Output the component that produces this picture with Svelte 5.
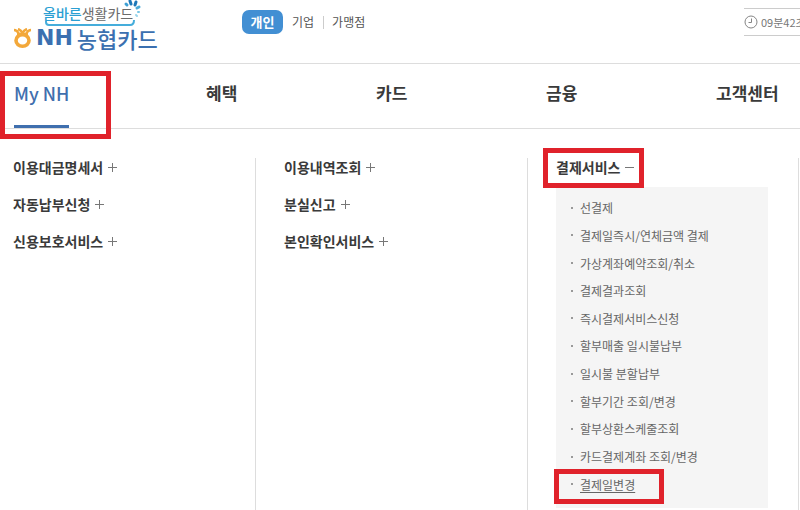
<script>
  const nav = ['My NH', '혜택', '카드', '금융', '고객센터'];
  const columns = [
    ['이용대금명세서', '자동납부신청', '신용보호서비스'],
    ['이용내역조회', '분실신고', '본인확인서비스']
  ];
  const services = [
    '선결제',
    '결제일즉시/연체금액 결제',
    '가상계좌예약조회/취소',
    '결제결과조회',
    '즉시결제서비스신청',
    '할부매출 일시불납부',
    '일시불 분할납부',
    '할부기간 조회/변경',
    '할부상환스케줄조회',
    '카드결제계좌 조회/변경',
    '결제일변경'
  ];
</script>

<div class="page">
  <header>
    <a class="logo" href="#home">
      <span class="slogan">
        <span class="blue">올바른</span><span>생활카드</span>
        <svg class="swoosh" width="100" height="28" viewBox="0 0 100 28" aria-hidden="true">
          <path d="M4 21v1q0 3 3 3h81q4 0 4-5" fill="none" stroke="#45addb" stroke-width="2" />
          <g stroke-linecap="round" stroke-width="3">
            <path d="M84 4l1 1" stroke="#3d9fd3" />
            <path d="M88 1l1 3" stroke="#1d77b8" />
            <path d="M94 2l-1 3" stroke="#1d77b8" />
            <path d="M97 7l-2 1" stroke="#4baad8" />
            <path d="M96 12h1" stroke="#79c6e6" stroke-width="2" />
            <path d="M94 15l1 1" stroke="#9ad5ec" stroke-width="2" />
          </g>
        </svg>
      </span>
      <span class="brand">
        <svg width="19" height="20" viewBox="0 0 19 20" aria-hidden="true">
          <path d="M1 2q3 0 5 4M18 2q-3 0-5 4M5 1q3 1 4.500 4 1.500-3 4.500-4M4 6h11" fill="none" stroke="#f3a83a" stroke-width="2.500" />
          <ellipse cx="9.500" cy="12.500" rx="6.500" ry="5.700" fill="none" stroke="#f3a83a" stroke-width="3.600" />
        </svg>
        <span class="nh">NH</span><span class="name">농협카드</span>
      </span>
    </a>
    <nav class="segments" aria-label="회원 구분">
      <a class="on" href="#personal">개인</a>
      <a href="#corporate">기업</a>
      <a class="split" href="#merchant">가맹점</a>
    </nav>
    <div class="timer">
      <svg width="14" height="14" viewBox="0 0 14 14" fill="none" stroke="#858585" aria-hidden="true">
        <circle cx="7" cy="7" r="6" />
        <path d="M7.500 3.500v4h-3" />
      </svg>
      <span>09분42초</span>
    </div>
  </header>

  <nav class="main" aria-label="주 메뉴">
    {#each nav as item, i}
      <div><a class:current={i === 0} href="#menu{i}">{item}</a></div>
    {/each}
    <span class="mark mark-nav"></span>
  </nav>

  <main>
    {#each columns as items}
      <section>
        {#each items as item}
          <button type="button">{item}
            <svg width="9" height="9" viewBox="0 0 9 9" stroke="#777" aria-hidden="true"><path d="M0 4.500h9M4.500 0v9" /></svg>
          </button>
        {/each}
      </section>
    {/each}
    <section>
      <button type="button" aria-expanded="true">결제서비스
        <svg width="9" height="9" viewBox="0 0 9 9" stroke="#777" aria-hidden="true"><path d="M0 4.500h9" /></svg>
        <span class="mark mark-service"></span>
      </button>
      <ul>
        {#each services as item, i}
          <li>
            <a class:picked={i === services.length - 1} href="#service{i}">{item}</a>
            {#if i === services.length - 1}<span class="mark mark-item"></span>{/if}
          </li>
        {/each}
      </ul>
    </section>
  </main>
</div>

<style>
  :global(body) {
    margin: 0;
    background: #fff;
  }
  .page {
    overflow: hidden;
    font-family: 'Noto Sans CJK KR', 'Noto Sans', sans-serif;
    color: #3a3a3a;
  }
  a {
    color: inherit;
    text-decoration: none;
  }
  svg {
    flex: none;
  }
  header {
    display: flex;
    align-items: flex-start;
    height: 63px;
    padding-left: 13px;
    border-bottom: 1px solid #ddd;
    white-space: nowrap;
  }
  .logo {
    flex: none;
    width: 229px;
  }
  .slogan {
    position: relative;
    display: flex;
    height: 26px;
    padding-left: 30px;
    font-size: 14px;
    line-height: 26px;
    color: #6b6b6b;
  }
  .blue {
    color: #2b9fd3;
    font-weight: 500;
  }
  .swoosh {
    position: absolute;
    left: 29px;
    top: 0;
  }
  .brand {
    display: flex;
    align-items: center;
    height: 24px;
    color: #3b70b0;
    font-size: 22px;
    line-height: 24px;
  }
  .nh {
    margin: 0 4px;
    font-family: 'DejaVu Sans', sans-serif;
    font-weight: 700;
  }
  .name {
    font-weight: 500;
  }
  .segments {
    display: flex;
    align-items: center;
    padding-top: 10px;
    font-size: 12px;
    line-height: 24px;
    color: #555;
  }
  .segments a {
    margin-right: 9px;
  }
  .segments .on {
    width: 41px;
    border-radius: 7px;
    background: #428fd3;
    color: #fff;
    font-size: 13px;
    font-weight: 700;
    text-align: center;
  }
  .segments .split {
    padding-left: 9px;
    background: linear-gradient(#ccc, #ccc) left center / 1px 13px no-repeat;
  }
  .timer {
    display: flex;
    align-items: center;
    gap: 3px;
    box-sizing: border-box;
    width: 56px;
    height: 28px;
    margin: 8px 0 0 auto;
    border: solid #ccc;
    border-width: 1px 0;
    color: #777;
    font-size: 11px;
  }
  .main {
    position: relative;
    display: grid;
    grid-template-columns: 192fr 170fr 170fr 170fr 84fr;
    height: 64px;
    padding-left: 14px;
    border-bottom: 1px solid #ddd;
    font-size: 17px;
    font-weight: 700;
    line-height: 58px;
    white-space: nowrap;
  }
  .main a {
    display: inline-block;
    height: 61px;
  }
  .main .current {
    border-bottom: 3px solid #3f6fae;
    color: #3f6fae;
    font-size: 18px;
    font-weight: 500;
  }
  .mark {
    position: absolute;
    box-sizing: border-box;
    border: 5px solid #e0222b;
    pointer-events: none;
  }
  .mark-nav {
    left: 0;
    top: 7px;
    width: 111px;
    height: 68px;
  }
  main {
    display: grid;
    grid-template-columns: 256fr 272fr 271fr;
    padding: 29px 1px 0 0;
  }
  section {
    display: flex;
    flex-direction: column;
    align-items: flex-start;
    min-height: 352px;
    padding-left: 28px;
    border-right: 1px solid #ddd;
  }
  section:first-child {
    padding-left: 13px;
  }
  button {
    position: relative;
    display: flex;
    align-items: center;
    gap: 5px;
    height: 19px;
    margin: 0 0 18px;
    padding: 0;
    border: 0;
    background: none;
    color: #3a3a3a;
    font: 700 14px/19px 'Noto Sans CJK KR', 'Noto Sans', sans-serif;
    white-space: nowrap;
  }
  .mark-service {
    left: -13px;
    top: -10px;
    width: 101px;
    height: 40px;
  }
  ul {
    display: grid;
    grid-auto-rows: 1fr;
    box-sizing: border-box;
    align-self: stretch;
    min-height: 321px;
    margin: -8px 30px 0 0;
    padding: 7px 0 10px 15px;
    background: #f5f5f5;
    list-style: none;
    color: #666;
    font-size: 12px;
  }
  li {
    position: relative;
    display: flex;
    align-items: center;
    white-space: nowrap;
  }
  li::before {
    content: '';
    width: 2px;
    height: 2px;
    margin-right: 7px;
    background: #999;
  }
  .picked {
    text-decoration: underline;
    text-underline-offset: 2px;
  }
  .mark-item {
    left: -17px;
    top: -1px;
    width: 110px;
    height: 35px;
  }
</style>
